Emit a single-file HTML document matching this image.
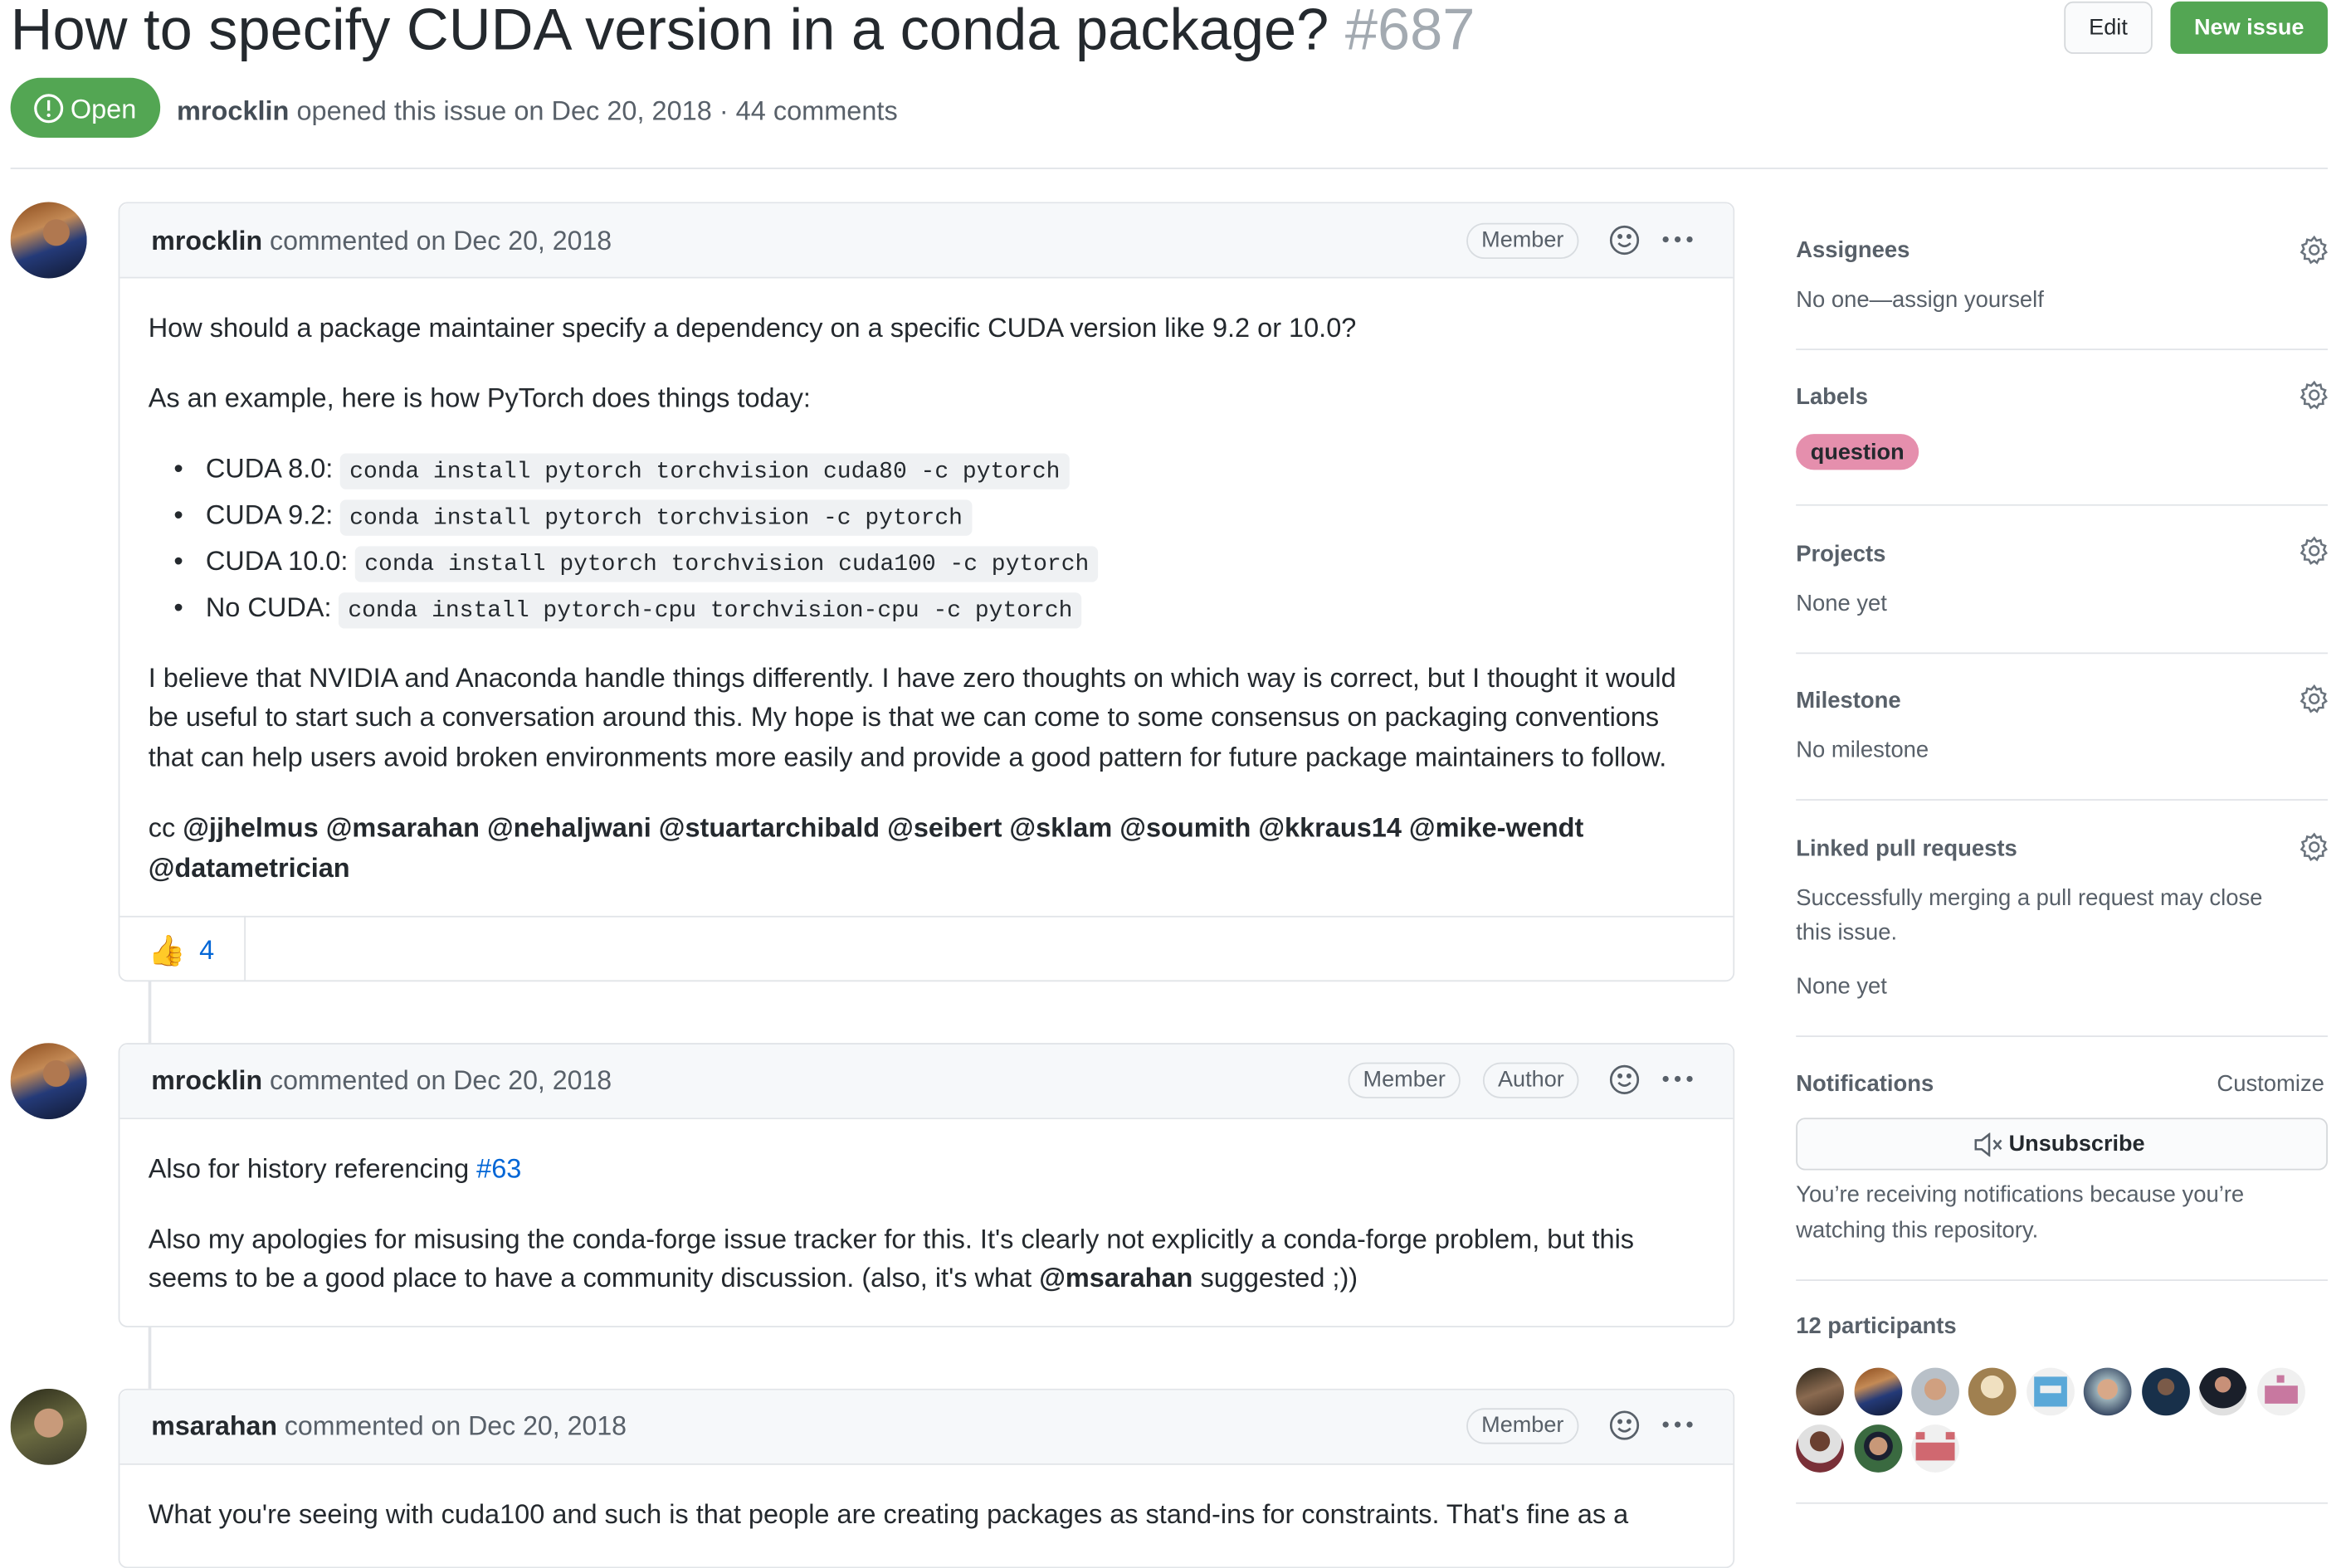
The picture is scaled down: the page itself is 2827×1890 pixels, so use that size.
<!DOCTYPE html>
<html><head><meta charset="utf-8"><style>
*{box-sizing:border-box;margin:0;padding:0}
html,body{width:2827px;height:1838px;overflow:hidden;background:#fff}
#w{position:absolute;left:0;top:0;width:1563px;height:1019px;transform:scale(1.8050,1.8037);transform-origin:0 0;font-family:"Liberation Sans",sans-serif;color:#24292e}
.a{position:absolute;white-space:nowrap;line-height:1;margin-top:2px}
.b{font-size:18px}
.s{font-size:15.2px;color:#586069}
.h{font-size:15.2px;font-weight:bold;color:#586069}
.hr{position:absolute;height:1px;background:#e1e4e8}
.box{position:absolute;border:1px solid #e1e4e8;border-radius:6px;background:#fff}
.hd{position:absolute;left:0;right:0;top:0;background:#f6f8fa;border-bottom:1px solid #e1e4e8;border-radius:6px 6px 0 0}
code{font-family:"Liberation Mono",monospace;font-size:15.5px;background:#eff1f3;border-radius:4px;padding:3px 6px}
.badge{position:absolute;border:1px solid #d8dce0;border-radius:12px;font-size:15px;color:#586069;height:24px;line-height:22px;padding:0 9px}
.av{position:absolute;border-radius:50%}
.dot{position:absolute;width:4px;height:4px;border-radius:50%;background:#586069}
.gear{position:absolute;width:20px;height:20px}
.pa{position:absolute;width:32px;height:32px;border-radius:50%;top:914px}
</style></head><body><div id="w">
<div class="a" style="left:7px;top:-1px;font-size:39px">How to specify CUDA version in a conda package? <span style="color:#a3aab1">#687</span></div>
<div style="position:absolute;left:1378px;top:1px;width:59px;height:35px;border:1px solid #d5d8db;border-radius:6px;background:#fafbfc;font-size:15px;text-align:center;line-height:33px">Edit</div>
<div style="position:absolute;left:1449px;top:1px;width:105px;height:35px;border-radius:6px;background:#53a653;color:#fff;font-size:15px;font-weight:bold;text-align:center;line-height:35px">New issue</div>
<div style="position:absolute;left:7px;top:52px;width:100px;height:40px;border-radius:20px;background:#53a653;color:#fff;font-size:18px;line-height:42px;padding-left:40px">Open</div>
<svg style="position:absolute;left:22px;top:62px" width="21" height="21" viewBox="0 0 21 21"><circle cx="10.5" cy="10.5" r="8.8" fill="none" stroke="#fff" stroke-width="1.8"/><rect x="9.6" y="5" width="1.8" height="7" fill="#fff"/><circle cx="10.5" cy="15" r="1.2" fill="#fff"/></svg>
<div class="a" style="left:118px;top:63px;font-size:18px;color:#586069"><b style="color:#444d56">mrocklin</b> opened this issue on Dec 20, 2018 · 44 comments</div>
<div class="hr" style="left:7px;top:112px;width:1547px"></div>

<div style="position:absolute;left:99px;top:655px;width:2px;height:42px;background:#e1e4e8"></div>
<div style="position:absolute;left:99px;top:886px;width:2px;height:42px;background:#e1e4e8"></div>

<!-- comment 1 -->
<div class="av" style="left:7px;top:135px;width:51px;height:51px;background:radial-gradient(circle at 60% 40%,#b07850 0 20%,transparent 21%),linear-gradient(160deg,#8a4a1c 0%,#c48a55 35%,#243a78 60%,#101830 100%)"></div>
<div class="box" style="left:79px;top:135px;width:1079px;height:521px"><div class="hd" style="height:50px"></div></div>
<div class="a" style="left:101px;top:151px;font-size:17.8px;color:#586069"><b style="color:#24292e">mrocklin</b> commented on Dec 20, 2018</div>
<div class="badge" style="left:979px;top:149px">Member</div>
<svg style="position:absolute;left:1074px;top:150px" width="21" height="21" viewBox="0 0 21 21" fill="none" stroke="#586069" stroke-width="1.5"><circle cx="10.5" cy="10.5" r="9"/><path d="M6.5 12.5q4 4 8 0"/><circle cx="7.5" cy="8" r=".9" fill="#586069"/><circle cx="13.5" cy="8" r=".9" fill="#586069"/></svg>
<div class="dot" style="left:1110px;top:158px"></div><div class="dot" style="left:1118px;top:158px"></div><div class="dot" style="left:1126px;top:158px"></div>

<div class="a b" style="left:99px;top:208px">How should a package maintainer specify a dependency on a specific CUDA version like 9.2 or 10.0?</div>
<div class="a b" style="left:99px;top:255px">As an example, here is how PyTorch does things today:</div>
<div class="a b" style="left:116px;top:302px">•&nbsp;&nbsp; CUDA 8.0: <code>conda install pytorch torchvision cuda80 -c pytorch</code></div>
<div class="a b" style="left:116px;top:333px">•&nbsp;&nbsp; CUDA 9.2: <code>conda install pytorch torchvision -c pytorch</code></div>
<div class="a b" style="left:116px;top:364px">•&nbsp;&nbsp; CUDA 10.0: <code>conda install pytorch torchvision cuda100 -c pytorch</code></div>
<div class="a b" style="left:116px;top:395px">•&nbsp;&nbsp; No CUDA: <code>conda install pytorch-cpu torchvision-cpu -c pytorch</code></div>
<div class="a b" style="left:99px;top:442px">I believe that NVIDIA and Anaconda handle things differently. I have zero thoughts on which way is correct, but I thought it would</div>
<div class="a b" style="left:99px;top:468px">be useful to start such a conversation around this. My hope is that we can come to some consensus on packaging conventions</div>
<div class="a b" style="left:99px;top:495px">that can help users avoid broken environments more easily and provide a good pattern for future package maintainers to follow.</div>
<div class="a b" style="left:99px;top:542px">cc <b>@jjhelmus @msarahan @nehaljwani @stuartarchibald @seibert @sklam @soumith @kkraus14 @mike-wendt</b></div>
<div class="a b" style="left:99px;top:569px"><b>@datametrician</b></div>
<div class="hr" style="left:80px;top:612px;width:1077px"></div>
<div style="position:absolute;left:163px;top:612px;width:1px;height:43px;background:#e1e4e8"></div>
<div class="a" style="left:99px;top:624px;font-size:20px">👍</div>
<div class="a b" style="left:133px;top:624px;color:#0366d6">4</div>

<!-- comment 2 -->
<div class="av" style="left:7px;top:697px;width:51px;height:51px;background:radial-gradient(circle at 60% 40%,#b07850 0 20%,transparent 21%),linear-gradient(160deg,#8a4a1c 0%,#c48a55 35%,#243a78 60%,#101830 100%)"></div>
<div class="box" style="left:79px;top:697px;width:1079px;height:190px"><div class="hd" style="height:50px"></div></div>
<div class="a" style="left:101px;top:712px;font-size:17.8px;color:#586069"><b style="color:#24292e">mrocklin</b> commented on Dec 20, 2018</div>
<div class="badge" style="left:900px;top:710px">Member</div>
<div class="badge" style="left:990px;top:710px">Author</div>
<svg style="position:absolute;left:1074px;top:711px" width="21" height="21" viewBox="0 0 21 21" fill="none" stroke="#586069" stroke-width="1.5"><circle cx="10.5" cy="10.5" r="9"/><path d="M6.5 12.5q4 4 8 0"/><circle cx="7.5" cy="8" r=".9" fill="#586069"/><circle cx="13.5" cy="8" r=".9" fill="#586069"/></svg>
<div class="dot" style="left:1110px;top:719px"></div><div class="dot" style="left:1118px;top:719px"></div><div class="dot" style="left:1126px;top:719px"></div>
<div class="a b" style="left:99px;top:770px">Also for history referencing <span style="color:#0366d6">#63</span></div>
<div class="a b" style="left:99px;top:817px">Also my apologies for misusing the conda-forge issue tracker for this. It's clearly not explicitly a conda-forge problem, but this</div>
<div class="a b" style="left:99px;top:843px">seems to be a good place to have a community discussion. (also, it's what <b>@msarahan</b> suggested ;))</div>

<!-- comment 3 -->
<div class="av" style="left:7px;top:928px;width:51px;height:51px;background:radial-gradient(circle at 50% 45%,#c89a7a 0 25%,transparent 26%),linear-gradient(160deg,#2a2a1a,#6a6a40 50%,#3a3a2a)"></div>
<div class="box" style="left:79px;top:928px;width:1079px;height:120px"><div class="hd" style="height:50px"></div></div>
<div class="a" style="left:101px;top:943px;font-size:17.8px;color:#586069"><b style="color:#24292e">msarahan</b> commented on Dec 20, 2018</div>
<div class="badge" style="left:979px;top:941px">Member</div>
<svg style="position:absolute;left:1074px;top:942px" width="21" height="21" viewBox="0 0 21 21" fill="none" stroke="#586069" stroke-width="1.5"><circle cx="10.5" cy="10.5" r="9"/><path d="M6.5 12.5q4 4 8 0"/><circle cx="7.5" cy="8" r=".9" fill="#586069"/><circle cx="13.5" cy="8" r=".9" fill="#586069"/></svg>
<div class="dot" style="left:1110px;top:950px"></div><div class="dot" style="left:1118px;top:950px"></div><div class="dot" style="left:1126px;top:950px"></div>
<div class="a b" style="left:99px;top:1001px">What you're seeing with cuda100 and such is that people are creating packages as stand-ins for constraints. That's fine as a</div>

<!-- sidebar -->
<div class="a h" style="left:1199px;top:158px">Assignees</div>
<div class="a s" style="left:1199px;top:191px">No one—assign yourself</div>
<div class="hr" style="left:1199px;top:233px;width:355px"></div>
<div class="a h" style="left:1199px;top:256px">Labels</div>
<div style="position:absolute;left:1199px;top:290px;width:82px;height:24px;border-radius:12px;background:#e58fad;font-size:15px;font-weight:bold;text-align:center;line-height:25px;color:#24292e">question</div>
<div class="hr" style="left:1199px;top:337px;width:355px"></div>
<div class="a h" style="left:1199px;top:361px">Projects</div>
<div class="a s" style="left:1199px;top:394px">None yet</div>
<div class="hr" style="left:1199px;top:436px;width:355px"></div>
<div class="a h" style="left:1199px;top:459px">Milestone</div>
<div class="a s" style="left:1199px;top:492px">No milestone</div>
<div class="hr" style="left:1199px;top:534px;width:355px"></div>
<div class="a h" style="left:1199px;top:558px">Linked pull requests</div>
<div class="a s" style="left:1199px;top:591px">Successfully merging a pull request may close</div>
<div class="a s" style="left:1199px;top:614px">this issue.</div>
<div class="a s" style="left:1199px;top:650px">None yet</div>
<div class="hr" style="left:1199px;top:692px;width:355px"></div>
<div class="a h" style="left:1199px;top:715px">Notifications</div>
<div class="a s" style="left:1480px;top:715px">Customize</div>
<div style="position:absolute;left:1199px;top:747px;width:355px;height:35px;border:1px solid #d5d8db;border-radius:6px;background:#fafbfc;font-size:15px;font-weight:bold;text-align:center;line-height:33px;padding-left:20px">Unsubscribe</div>
<svg style="position:absolute;left:1318px;top:757px" width="22" height="16" viewBox="0 0 22 16" fill="none" stroke="#586069" stroke-width="1.4"><path d="M1 5h4l5-4v14l-5-4H1z"/><path d="M13 5l5 6M18 5l-5 6"/></svg>
<div class="a s" style="left:1199px;top:789px">You’re receiving notifications because you’re</div>
<div class="a s" style="left:1199px;top:813px">watching this repository.</div>
<div class="hr" style="left:1199px;top:855px;width:355px"></div>
<div class="a h" style="left:1199px;top:877px">12 participants</div>
<div class="pa" style="left:1199px;background:linear-gradient(160deg,#2a2418,#8a6a50 50%,#3a2a20)"></div>
<div class="pa" style="left:1238px;background:linear-gradient(160deg,#8a4a1c,#c48a55 35%,#243a78 60%,#101830)"></div>
<div class="pa" style="left:1276px;background:radial-gradient(circle at 50% 45%,#d0a080 0 30%,#b8c0c8 31%)"></div>
<div class="pa" style="left:1314px;background:radial-gradient(circle at 50% 40%,#f0e0c0 0 30%,#a08050 31%)"></div>
<div class="pa" style="left:1353px;background:#f0f0f0"><div style="position:absolute;left:5px;top:6px;width:22px;height:20px;background:#5aa8d8"></div><div style="position:absolute;left:9px;top:12px;width:14px;height:5px;background:#f0f0f0"></div></div>
<div class="pa" style="left:1391px;background:radial-gradient(circle at 50% 45%,#d8a888 0 28%,#9ab0b8 29%,#203050 85%)"></div>
<div class="pa" style="left:1430px;background:radial-gradient(circle at 50% 40%,#7a5a48 0 22%,#18304a 23%)"></div>
<div class="pa" style="left:1468px;background:radial-gradient(circle at 50% 35%,#c89078 0 20%,#1a1f2a 21% 60%,#e0e0e0 61%)"></div>
<div class="pa" style="left:1507px;background:#f0f0f0"><div style="position:absolute;left:5px;top:12px;width:22px;height:12px;background:#c878a0"></div><div style="position:absolute;left:13px;top:5px;width:5px;height:5px;background:#c878a0"></div></div>
<div class="pa" style="left:1199px;top:952px;background:radial-gradient(circle at 50% 35%,#6a4030 0 25%,#e0e0e0 26% 55%,#7a3038 56%)"></div>
<div class="pa" style="left:1238px;top:952px;background:radial-gradient(circle at 50% 45%,#c89878 0 25%,#1a2030 26% 40%,#3a6a40 41%)"></div>
<div class="pa" style="left:1276px;top:952px;background:#f0f0f0"><div style="position:absolute;left:3px;top:12px;width:26px;height:12px;background:#d06870"></div><div style="position:absolute;left:3px;top:5px;width:6px;height:5px;background:#d06870"></div><div style="position:absolute;left:23px;top:5px;width:6px;height:5px;background:#d06870"></div></div>
<div class="hr" style="left:1199px;top:1004px;width:355px"></div>

<svg class="gear" style="left:1535px;top:157px" viewBox="0 0 20 20" fill="none" stroke="#6a737d" stroke-width="1.4"><circle cx="10" cy="10" r="3"/><path d="M10 1.5l1.5 2.3 2.7-.7.6 2.7 2.6 1-1 2.6 1.6 2.2-2.3 1.5.2 2.8-2.8.1-1.3 2.5L10 17l-2.3 1.5-1.3-2.5-2.8-.1.2-2.8-2.3-1.5L3.1 9.4l-1-2.6 2.6-1 .6-2.7 2.7.7z"/></svg>
<svg class="gear" style="left:1535px;top:254px" viewBox="0 0 20 20" fill="none" stroke="#6a737d" stroke-width="1.4"><circle cx="10" cy="10" r="3"/><path d="M10 1.5l1.5 2.3 2.7-.7.6 2.7 2.6 1-1 2.6 1.6 2.2-2.3 1.5.2 2.8-2.8.1-1.3 2.5L10 17l-2.3 1.5-1.3-2.5-2.8-.1.2-2.8-2.3-1.5L3.1 9.4l-1-2.6 2.6-1 .6-2.7 2.7.7z"/></svg>
<svg class="gear" style="left:1535px;top:358px" viewBox="0 0 20 20" fill="none" stroke="#6a737d" stroke-width="1.4"><circle cx="10" cy="10" r="3"/><path d="M10 1.5l1.5 2.3 2.7-.7.6 2.7 2.6 1-1 2.6 1.6 2.2-2.3 1.5.2 2.8-2.8.1-1.3 2.5L10 17l-2.3 1.5-1.3-2.5-2.8-.1.2-2.8-2.3-1.5L3.1 9.4l-1-2.6 2.6-1 .6-2.7 2.7.7z"/></svg>
<svg class="gear" style="left:1535px;top:457px" viewBox="0 0 20 20" fill="none" stroke="#6a737d" stroke-width="1.4"><circle cx="10" cy="10" r="3"/><path d="M10 1.5l1.5 2.3 2.7-.7.6 2.7 2.6 1-1 2.6 1.6 2.2-2.3 1.5.2 2.8-2.8.1-1.3 2.5L10 17l-2.3 1.5-1.3-2.5-2.8-.1.2-2.8-2.3-1.5L3.1 9.4l-1-2.6 2.6-1 .6-2.7 2.7.7z"/></svg>
<svg class="gear" style="left:1535px;top:556px" viewBox="0 0 20 20" fill="none" stroke="#6a737d" stroke-width="1.4"><circle cx="10" cy="10" r="3"/><path d="M10 1.5l1.5 2.3 2.7-.7.6 2.7 2.6 1-1 2.6 1.6 2.2-2.3 1.5.2 2.8-2.8.1-1.3 2.5L10 17l-2.3 1.5-1.3-2.5-2.8-.1.2-2.8-2.3-1.5L3.1 9.4l-1-2.6 2.6-1 .6-2.7 2.7.7z"/></svg>
</div></body></html>
